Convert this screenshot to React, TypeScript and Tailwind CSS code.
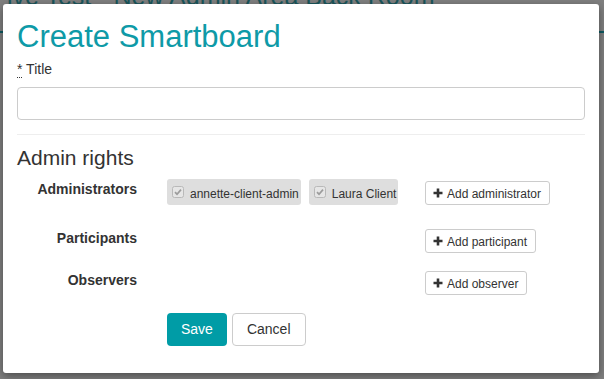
import React from 'react';

const font = "font-['Liberation_Sans',Arial,Helvetica,sans-serif]";

const CheckedBox = () => (
  <svg width="12" height="12" viewBox="0 0 12 12" className="shrink-0">
    <rect x="0.5" y="0.5" width="11" height="11" rx="2" fill="#e6e6e6" stroke="#b9b9b9" />
    <path d="M3 6.2 L5 8.2 L9 3.6" fill="none" stroke="#9c9c9c" strokeWidth="1.7" />
  </svg>
);

const Plus = () => (
  <svg width="10" height="10" viewBox="0 0 10 10" className="shrink-0">
    <path d="M5 0.5 V9.5 M0.5 5 H9.5" stroke="#333" strokeWidth="2.6" />
  </svg>
);

const Chip = ({ name }: { name: string }) => (
  <div className="flex items-center gap-[6px] h-[26px] pl-[5px] pr-[2px] bg-[#dedede] rounded-[3px]">
    <CheckedBox />
    <span className="text-[12px] leading-[14px] text-[#333] mt-[3px]">{name}</span>
  </div>
);

const AddButton = ({ label, className }: { label: string; className?: string }) => (
  <button
    className={`flex items-center gap-[4px] h-[24px] pl-[7px] pr-[8px] border border-[#ccc] rounded-[3px] bg-white text-[12px] text-[#333] ${className ?? ''}`}
  >
    <Plus />
    <span className="mt-[1px]">{label}</span>
  </button>
);

export default function App() {
  return (
    <div className={`relative w-[604px] h-[379px] overflow-hidden bg-[#7f7f7f] ${font}`}>
      {/* page behind the dimmed backdrop */}
      <div className="text-[25px] leading-[25px] -mt-[16px] pl-[7px] text-[#1a565b] whitespace-nowrap">
        ive Test - New Admin Area Back Room
      </div>
      <div className="mt-[22px] h-[2px] bg-[#0d5a61]" />

      {/* modal */}
      <div className="absolute left-[3px] top-[4px] w-[596px] h-[369px] bg-white rounded-[3px] px-[14px] pt-[16px] shadow-[0_3px_9px_rgba(0,0,0,0.4)]">
        <h2 className="text-[31px] leading-[33px] text-[#0e9aa7]">Create Smartboard</h2>

        <label className="block mt-[6px] text-[14px] leading-[20px] text-[#333]">
          <abbr className="no-underline border-b border-dotted border-[#333]" title="required">
            *
          </abbr>{' '}
          Title
        </label>
        <input
          type="text"
          className="block w-full h-[33px] mt-[8px] border border-[#ccc] rounded-[4px] px-3 text-[14px] outline-none"
        />

        <div className="mt-[14px] h-px bg-[#eee]" />

        <h4 className="mt-[11px] text-[21px] leading-[23px] text-[#333]">Admin rights</h4>

        <div className="grid grid-cols-[120px_288px_1fr] mt-[10px] text-[#333]">
          {/* administrators */}
          <div className="text-right font-bold text-[14px] leading-[20px]">Administrators</div>
          <div className="flex gap-[8px] pl-[30px]">
            <Chip name="annette-client-admin" />
            <Chip name="Laura Client" />
          </div>
          <div>
            <AddButton label="Add administrator" className="mt-[2px]" />
          </div>

          {/* participants */}
          <div className="mt-[23px] text-right font-bold text-[14px] leading-[20px]">Participants</div>
          <div className="mt-[23px]" />
          <div className="mt-[23px]">
            <AddButton label="Add participant" className="mt-[1px]" />
          </div>

          {/* observers */}
          <div className="mt-[17px] text-right font-bold text-[14px] leading-[20px]">Observers</div>
          <div className="mt-[17px]" />
          <div className="mt-[17px]">
            <AddButton label="Add observer" className="mt-[1px]" />
          </div>

          {/* actions */}
          <div className="mt-[18px]" />
          <div className="mt-[18px] flex gap-[5px] pl-[30px]">
            <button className="h-[33px] px-[14px] rounded-[4px] bg-[#009ca6] text-white text-[14px]">Save</button>
            <button className="h-[33px] px-[14px] rounded-[4px] border border-[#ccc] bg-white text-[#333] text-[14px]">
              Cancel
            </button>
          </div>
          <div className="mt-[18px]" />
        </div>
      </div>
    </div>
  );
}
